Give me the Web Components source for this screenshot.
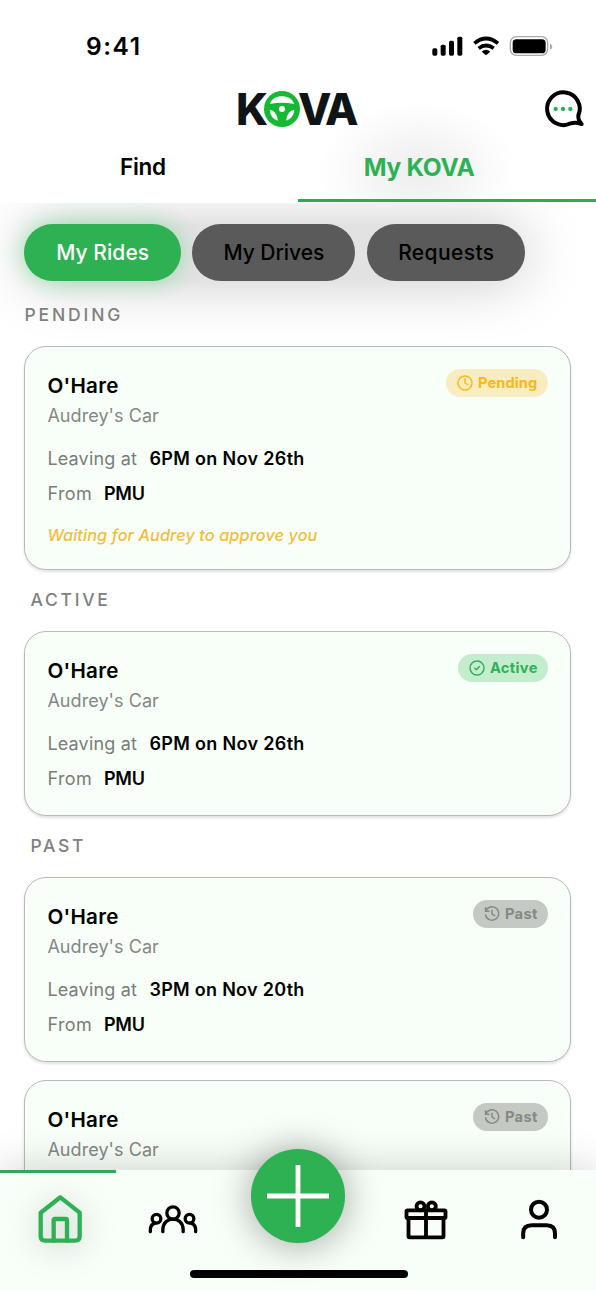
<!DOCTYPE html>
<html lang="en">
<head>
<meta charset="utf-8">
<title>KOVA</title>
<style>
html,body{margin:0;padding:0}
body{width:596px;height:1290px;overflow:hidden;background:#fff;font-family:Inter,"Liberation Sans",sans-serif}
</style>
</head>
<body>
<kova-app></kova-app>
<script>
const define = (name, html, setup) => {
  const t = document.createElement('template');
  t.innerHTML = html;
  customElements.define(name, class extends HTMLElement {
    connectedCallback() {
      if (this.shadowRoot) return;
      this.attachShadow({ mode: 'open' }).append(t.content.cloneNode(true));
      if (setup) setup(this, this.shadowRoot);
    }
  });
};

/* Single line of text tracked to a given width. */
define('track-text', `<style>
:host{display:inline-block;white-space:nowrap;flex:none}
span{display:inline-block;white-space:nowrap}
</style><span><slot></slot></span>`, (el, root) => {
  const span = root.querySelector('span');
  const target = parseFloat(el.getAttribute('w'));
  const natural = span.getBoundingClientRect().width;
  const count = el.textContent.length;
  if (count > 1) span.style.letterSpacing = ((target - natural) / (count - 1)) + 'px';
  el.style.width = target + 'px';
});

define('status-bar', `<style>
:host{display:flex;height:76px;align-items:center;justify-content:space-between;padding:16px 43.5px 0 86px;box-sizing:border-box}
.time{font-size:24.5px;font-weight:600;color:#000;line-height:30px}
svg{display:block}
</style>
<track-text class="time" w="54">9:41</track-text>
<svg width="122" height="24" viewBox="398 102 366 72">
<rect x="402" y="145" width="15" height="22" rx="5"/><rect x="427" y="134" width="15" height="33" rx="5"/><rect x="452" y="122" width="15" height="45" rx="5"/><rect x="477" y="110" width="15" height="57" rx="5"/>
<g fill="none" stroke="#000" stroke-width="11"><path d="M528 130Q563 101 599 130"/><path d="M541 145Q563 128 586 145"/></g>
<path d="M550 155Q563 144 576 155L563 166Z"/>
<rect x="636" y="110" width="112" height="56" rx="18" fill="none" stroke="#aaa" stroke-width="4"/>
<rect x="643" y="118" width="99" height="42" rx="11"/><path d="M755 131q7 3 7 9t-7 9z" fill="#aaa"/>
</svg>`);

define('kova-logo', `<style>
:host{display:flex;align-items:center;font-size:43.5px;font-weight:800;color:#0f1516;line-height:44px}
.k{margin-left:-2px}
svg{display:block;margin-left:-3.5px;width:36px;height:36px}
.va{margin-left:-1.5px}
</style>
<track-text class="k" w="31">K</track-text>
<svg viewBox="791 273 108 108"><circle cx="845" cy="327" r="54" fill="#17b833"/>
<g fill="#fff"><path d="M809 312C816 281 874 281 881 312Q845 305 809 312Z"/><path d="M808 329Q829 332 833 362Q810 355 808 329Z"/><path d="M882 329Q861 332 857 362Q880 355 882 329Z"/><circle cx="845" cy="327" r="9"/></g></svg>
<track-text class="va" w="60.5">VA</track-text>`);

define('app-header', `<style>
:host{display:block;position:relative;z-index:2;height:202.5px;background:radial-gradient(ellipse 100px 72px at 418px 172px,rgba(0,0,0,.065),rgba(0,0,0,.045) 40%,rgba(0,0,0,.015) 75%,transparent) #fff}
.brand{display:grid;grid-template-columns:238px 1fr 40px;height:66px;align-items:center;padding-right:12.5px}
.brand kova-logo{grid-column:2}
.brand svg{display:block;overflow:visible}
.tabs{display:grid;grid-template-columns:297.5px 1fr;height:60px}
.tab{display:flex;justify-content:center;align-items:center;font-size:22.5px;font-weight:600;color:#000;padding:0 11.5px 12px 0;box-sizing:border-box}
.tab.on{color:#2eb154;font-size:24.5px;font-weight:650;border-bottom:3px solid #2eaa54;padding:0 55px 7px 0}
</style>
<status-bar></status-bar>
<div class="brand"><kova-logo></kova-logo>
<svg width="40" height="36" viewBox="739 273 120 108"><path d="M842 346A49 49 0 1 0 819 370Q834 366 852 372Q841 362 842 346Z" fill="none" stroke="#000" stroke-width="12" stroke-linejoin="round"/><g fill="#2eb154"><circle cx="774" cy="327" r="6.5"/><circle cx="796" cy="327" r="6.5"/><circle cx="818" cy="327" r="6.5"/></g></svg></div>
<div class="tabs"><div class="tab"><track-text w="46">Find</track-text></div><div class="tab on"><track-text w="111">My KOVA</track-text></div></div>`);

define('filter-chip', `<style>
:host{display:flex;align-items:center;justify-content:center;box-sizing:border-box;height:56.5px;border-radius:29px;background:#5a5a5a;color:#000;font-size:21px;font-weight:550}
:host([on]){background:#2eb153;color:#fff;box-shadow:0 0 22px rgba(46,205,94,.42)}
</style><slot></slot>`);

define('section-label', `<style>
:host{display:flex;align-items:center;height:24px;font-size:17.5px;font-weight:500;color:#808080}
</style><slot></slot>`);

define('status-badge', `<style>
:host{display:flex;align-items:center;gap:5px;height:28px;border-radius:14px;padding:0 11px 0 10.5px;font-size:14.7px;font-weight:700}
:host([kind=pending]){background:#f8edc1;color:#fbb716}
:host([kind=active]){background:#c4edce;color:#30b058}
:host([kind=past]){background:#c4c9c4;color:#858985}
svg{display:block;width:16px;height:16px;fill:none;stroke:currentColor;stroke-width:1.45;stroke-linecap:round;stroke-linejoin:round}
</style><svg viewBox="0 0 16 16"></svg><slot></slot>`, (el, root) => {
  root.querySelector('svg').innerHTML = {
    pending: '<circle cx="8" cy="8" r="7"/><path d="M8 3.8V8l2.6 1.6"/>',
    active: '<circle cx="8" cy="8" r="7"/><path d="M5.7 8.2l1.7 1.6 3-3.2"/>',
    past: '<path d="M1.5 1.7v3.5H5M1.8 5A6.7 6.7 0 1 1 1.5 9M8 4.3V8l2.6 1.7"/>'
  }[el.getAttribute('kind')];
});

define('ride-card', `<style>
:host{display:block;box-sizing:border-box;width:547px;border:1.5px solid #b7bbb7;border-radius:22px;background:#f8fff8;padding:24px 22px 16px 22px;box-shadow:0 2px 3px rgba(0,0,0,.12);color:#000}
.top{display:flex;justify-content:space-between;align-items:flex-start}
.title{font-size:20.6px;font-weight:620;height:30px;line-height:30px;display:block}
.sub{font-size:18px;font-weight:400;color:#858785;height:30px;line-height:30px;display:block}
.row{display:flex;align-items:center;gap:12.5px;height:35.5px;font-size:18px;line-height:35px}
.row.first{margin-top:10.5px}
.key{font-weight:400;color:#7a7c7a}
.val{font-weight:600;font-size:18px}
.row.from{gap:12px;line-height:34px;height:34.5px}
::slotted([slot=note]){display:block;margin-top:7px;height:35px;line-height:35px;font-size:16.3px;font-weight:550;font-style:italic;color:#f1bd3e}
::slotted([slot=badge]){margin-top:-2px}
</style>
<div class="top"><div><track-text class="title" w="71">O'Hare</track-text><track-text class="sub" w="111.5">Audrey's Car</track-text></div><slot name="badge"></slot></div>
<div class="details"></div>
<slot name="note"></slot>`, (el, root) => {
  const when = el.getAttribute('when');
  if (!when) return;
  root.querySelector('.details').innerHTML = `
<div class="row first"><track-text class="key" w="89.5">Leaving at</track-text><track-text class="val" w="155">${when}</track-text></div>
<div class="row from"><track-text class="key" w="44.5">From</track-text><track-text class="val" w="41">PMU</track-text></div>`;
});

define('tab-bar', `<style>
:host{display:block;position:relative;z-index:3;height:120px;background:#f8fff8;box-shadow:0 0 44px rgba(0,0,0,.19)}
:host::before{content:"";display:block;width:116.3px;height:3px;background:#2eaa54}
.items{display:grid;grid-template-columns:120px 106px 144px 112px 113px;height:96px;justify-items:center}
svg{display:block;overflow:visible;fill:none;stroke:#000;stroke-linecap:round;stroke-linejoin:round}
.home{margin-top:20.3px;stroke:#2eb154;stroke-width:13;filter:drop-shadow(0 3px 16px rgba(0,0,0,.28))}
.people{margin-top:29px;stroke-width:10}
.add{position:relative;top:-23.7px;width:93.4px;height:93.4px;border-radius:50%;background:#2eb153;box-shadow:0 2px 38px rgba(0,0,0,.36);display:grid;place-items:center}
.add svg{stroke:#fff;stroke-width:4.8;stroke-linecap:butt}
.gift{margin-top:26px;stroke-width:11.5}
.user{margin-top:25px;stroke-width:12}
.handle{width:218px;height:7.5px;border-radius:4px;background:#000;margin:1px 0 0 190px}
</style>
<div class="items">
<svg class="home" width="48" height="50" viewBox="108 400 144 150"><path d="M122 459L181 413L239 459V530Q239 543 226 543H135Q122 543 122 530Z"/><path d="M161 543V482Q161 478 165 478H197Q201 478 201 482V543"/></svg>
<svg class="people" width="50" height="32" viewBox="444.5 427 150 96"><circle cx="519.5" cy="460" r="18.5"/><path d="M489 516V510C489 468 550 468 550 510V516"/><circle cx="470" cy="477" r="13"/><path d="M451.5 516Q450 494 465 491"/><circle cx="569" cy="477" r="13"/><path d="M587.5 516Q589 494 574 491"/></svg>
<div class="add"><svg width="64" height="64" viewBox="0 0 64 64"><path d="M32 1V63M1 32H63"/></svg></div>
<svg class="gift" width="44" height="42" viewBox="319.5 415 132 126"><rect x="327" y="449" width="117" height="23" rx="3"/><path d="M333 473V527Q333 530 336 530H435Q438 530 438 527V473M385.5 449V530"/><circle cx="369" cy="437" r="12"/><circle cx="403" cy="437" r="12"/></svg>
<svg class="user" width="38" height="42" viewBox="665 413 114 126"><circle cx="722" cy="448" r="24"/><path d="M674.5 531V519Q674.5 495 700 495H745Q770 495 770 519V531"/></svg>
</div>
<div class="handle"></div>`);

define('kova-app', `<style>
:host{display:flex;flex-direction:column;width:596px;height:1290px;overflow:hidden;background:#fff}
main{flex:1;min-height:0;position:relative;z-index:1;box-sizing:border-box;padding:21.5px 24.4px 0}
.chips{display:grid;grid-template-columns:156.5px 163px 158.5px;column-gap:11.5px;width:501px;margin-bottom:22px;border-radius:29px;background:#e2e2e2;box-shadow:0 0 58px 2px rgba(0,0,0,.21)}
.l1{margin-bottom:19px;position:relative}
.l2{margin:17.5px 0 19px 6px}
.c1,.c2,.c3,.c4{position:relative}
.c1{height:224.5px}.c2,.c3,.c4{height:185.5px}
.c4{margin-top:18px;height:120px}
</style>
<app-header></app-header>
<main>
<div class="chips"><filter-chip on><track-text w="93">My Rides</track-text></filter-chip><filter-chip><track-text w="101">My Drives</track-text></filter-chip><filter-chip><track-text w="96">Requests</track-text></filter-chip></div>
<section-label class="l1"><track-text w="96">PENDING</track-text></section-label>
<ride-card class="c1" when="6PM on Nov 26th"><status-badge slot="badge" kind="pending"><track-text w="59.5">Pending</track-text></status-badge><track-text slot="note" w="270">Waiting for Audrey to approve you</track-text></ride-card>
<section-label class="l2"><track-text w="77.5">ACTIVE</track-text></section-label>
<ride-card class="c2" when="6PM on Nov 26th"><status-badge slot="badge" kind="active"><track-text w="47.5">Active</track-text></status-badge></ride-card>
<section-label class="l2"><track-text w="53">PAST</track-text></section-label>
<ride-card class="c3" when="3PM on Nov 20th"><status-badge slot="badge" kind="past"><track-text w="32.5">Past</track-text></status-badge></ride-card>
<ride-card class="c4"><status-badge slot="badge" kind="past"><track-text w="32.5">Past</track-text></status-badge></ride-card>
</main>
<tab-bar></tab-bar>`);
</script>
</body>
</html>
